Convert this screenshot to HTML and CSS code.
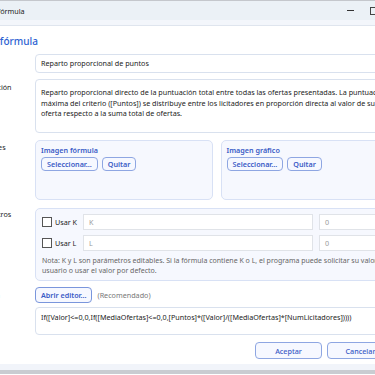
FILE: index.html
```html
<!DOCTYPE html>
<html lang="es">
<head>
    <meta charset="UTF-8">
    <title>Editar fórmula</title>
    <link rel="stylesheet" href="styles.css">
</head>
<body>
    <div class="window">
        <div class="titlebar">
            <span class="title">Editar fórmula</span>
            <div class="controls">
                <span class="ctl min"></span>
                <span class="ctl max"></span>
                <span class="ctl close"></span>
            </div>
        </div>
        <div class="band"></div>

        <div class="content">
            <h1 class="heading">Editar fórmula</h1>

            <div class="form">
                <label class="lbl lbl-mid">Nombre</label>
                <div class="field name-field">Reparto proporcional de puntos</div>

                <label class="lbl">Descripción</label>
                <div class="field desc-field">Reparto proporcional directo de la puntuación total entre todas las ofertas presentadas. La puntuación máxima del criterio ([Puntos]) se distribuye entre los licitadores en proporción directa al valor de su oferta respecto a la suma total de ofertas.</div>

                <label class="lbl">Imágenes</label>
                <div class="images">
                    <div class="group">
                        <div class="group-title">Imagen fórmula</div>
                        <div class="btn-row">
                            <button class="btn">Seleccionar...</button>
                            <button class="btn">Quitar</button>
                        </div>
                    </div>
                    <div class="group">
                        <div class="group-title">Imagen gráfico</div>
                        <div class="btn-row">
                            <button class="btn">Seleccionar...</button>
                            <button class="btn">Quitar</button>
                        </div>
                    </div>
                </div>

                <label class="lbl">Parámetros</label>
                <div class="group params">
                    <div class="param-row">
                        <span class="check"></span>
                        <span class="check-text">Usar K</span>
                        <div class="input">K</div>
                        <div class="input num">0</div>
                    </div>
                    <div class="param-row">
                        <span class="check"></span>
                        <span class="check-text">Usar L</span>
                        <div class="input">L</div>
                        <div class="input num">0</div>
                    </div>
                    <p class="note">Nota: K y L son parámetros editables. Si la fórmula contiene K o L, el programa puede solicitar su valor al usuario o usar el valor por defecto.</p>
                </div>

                <label class="lbl lbl-mid">Fórmula</label>
                <div class="editor-row">
                    <button class="btn btn-strong">Abrir editor...</button>
                    <span class="hint">(Recomendado)</span>
                </div>

                <span></span>
                <div class="field formula-field">If([Valor]&lt;=0,0,If([MediaOfertas]&lt;=0,0,[Puntos]*([Valor]/([MediaOfertas]*[NumLicitadores]))))</div>
            </div>
        </div>

        <div class="footer">
            <button class="btn big">Aceptar</button>
            <button class="btn big">Cancelar</button>
        </div>
        <div class="band bottom"></div>
    </div>
</body>
</html>
```

FILE: styles.css
```css
html, body {
    margin: 0;
    padding: 0;
    background: #ffffff;
    overflow: hidden;
}
body {
    font-family: "Noto Sans", "Open Sans", sans-serif;
    font-size: 7.2px;
    color: #222;
    border-top: 1px solid #c4c7cc;
}
.window {
    width: 450px;
    margin-left: -40px;
}
.titlebar {
    height: 19px;
    background: #ebf1f6;
    display: flex;
    align-items: center;
    justify-content: space-between;
    padding-left: 16px;
}
.title {
    font-size: 7.2px;
    color: #222;
}
.controls {
    display: flex;
    height: 100%;
}
.ctl {
    width: 24px;
    display: flex;
    align-items: center;
    justify-content: center;
}
.min::before {
    content: "";
    width: 7px;
    height: 1px;
    background: #333;
}
.max::before {
    content: "";
    width: 6px;
    height: 6px;
    border: 1px solid #444;
}
.band {
    height: 5px;
    background: #f3f6fb;
    border-bottom: 1px solid #dfe5ee;
}
.content {
    padding: 9px 12px 0 5px;
}
.heading {
    margin: 0 0 6px 0;
    padding-left: 4px;
    font-size: 10px;
    line-height: 13px;
    font-weight: 500;
    color: #2d62d2;
}
.form {
    display: grid;
    grid-template-columns: 70px 1fr;
    row-gap: 6px;
}
.lbl {
    padding-top: 3px;
    padding-left: 7px;
    color: #222;
}
.lbl-mid {
    align-self: center;
    padding-top: 0;
}
.field {
    border: 1px solid #d9e1ee;
    border-radius: 4px;
    background: #fff;
    padding: 3px 5px;
    line-height: 10.5px;
}
.name-field {
    box-sizing: border-box;
    height: 19px;
    display: flex;
    align-items: center;
}
.desc-field {
    height: 54px;
    box-sizing: border-box;
    padding-top: 7px;
}
.images {
    display: grid;
    grid-template-columns: 1fr 1fr;
    gap: 8px;
    margin-top: 1px;
}
.group {
    background: #f6f8fe;
    border: 1px solid #d8e1f5;
    border-radius: 5px;
    padding: 4px 5px;
    box-sizing: border-box;
}
.images .group {
    height: 60px;
}
.group-title {
    color: #3a5bc6;
    font-weight: 600;
    margin-bottom: 2px;
}
.btn-row {
    display: flex;
    gap: 4px;
}
.btn {
    font-family: inherit;
    font-size: 7.2px;
    font-weight: 600;
    color: #3a5bc6;
    background: #f6f8ff;
    border: 1px solid #8ea6e2;
    border-radius: 4px;
    height: 14px;
    padding: 0 5px;
    line-height: 12px;
}
.params {
    padding: 5px 5px 4px 6px;
    margin-top: 2px;
}
.param-row {
    display: flex;
    align-items: center;
    gap: 3px;
}
.param-row + .param-row {
    margin-top: 5px;
}
.check {
    width: 8px;
    height: 8px;
    border: 1px solid #555;
    background: #fff;
    flex: none;
}
.check-text {
    width: 24px;
    margin-right: 1px;
}
.input {
    flex: 1;
    height: 16px;
    box-sizing: border-box;
    border: 1px solid #e0e3e8;
    background: #fff;
    color: #999;
    padding: 0 5px;
    line-height: 14px;
}
.input.num {
    flex: 0 0 73px;
    margin-left: 3px;
}
.note {
    margin: 5px 0 0 0;
    font-size: 7px;
    color: #666;
    line-height: 10px;
}
.editor-row {
    display: flex;
    align-items: center;
    gap: 5px;
}
.btn-strong {
    height: 16px;
    border-color: #7a96dc;
}
.hint {
    color: #777;
}
.formula-field {
    margin-top: -2px;
    height: 28px;
    box-sizing: border-box;
    padding-top: 4px;
}
.footer {
    display: flex;
    justify-content: flex-end;
    gap: 5px;
    padding: 7px 16px 5px 0;
}
.btn.big {
    width: 67px;
    height: 17px;
    font-weight: 500;
}
.bottom {
    height: 6px;
    border-bottom: 4px solid #c9ccd1;
    background: #f1f4fa;
}
```
